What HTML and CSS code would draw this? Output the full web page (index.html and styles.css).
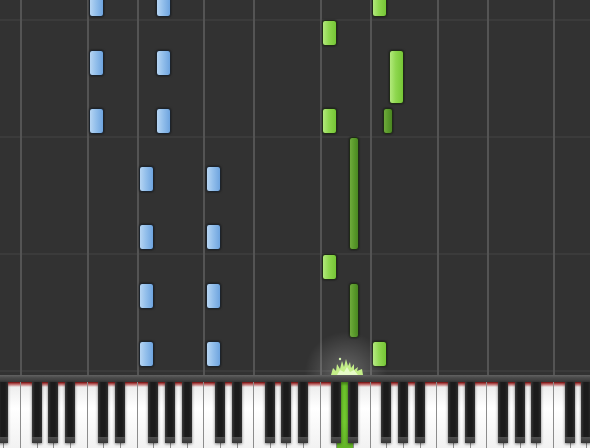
FILE: index.html
```html
<!DOCTYPE html>
<html lang="en">

    <head>
        <meta charset="UTF-8">
        <meta name="viewport" content="width=device-width, initial-scale=1.0">
        <link rel="stylesheet" href="styles.css">
        <title>Piano Roll</title>
    </head>

    <body>
        <div class="roll">
            <div class="grid">
                <div class="col col-edge"></div>
                <div class="col col-f"></div>
                <div class="col col-c"></div>
                <div class="col col-f"></div>
                <div class="col col-c"></div>
                <div class="col col-f"></div>
                <div class="col col-c"></div>
                <div class="col col-f"></div>
                <div class="col col-c"></div>
                <div class="col col-f"></div>
                <div class="col col-c"></div>
            </div>

            <!-- left hand -->
            <div class="note blue" style="left: 89px; top: -10px; height: 27px;"></div>
            <div class="note blue" style="left: 89px; top: 50px; height: 26px;"></div>
            <div class="note blue" style="left: 89px; top: 108px; height: 26px;"></div>
            <div class="note blue" style="left: 156px; top: -10px; height: 27px;"></div>
            <div class="note blue" style="left: 156px; top: 50px; height: 26px;"></div>
            <div class="note blue" style="left: 156px; top: 108px; height: 26px;"></div>

            <div class="note blue" style="left: 139px; top: 166px; height: 26px;"></div>
            <div class="note blue" style="left: 139px; top: 224px; height: 26px;"></div>
            <div class="note blue" style="left: 139px; top: 283px; height: 26px;"></div>
            <div class="note blue" style="left: 139px; top: 341px; height: 26px;"></div>
            <div class="note blue" style="left: 206px; top: 166px; height: 26px;"></div>
            <div class="note blue" style="left: 206px; top: 224px; height: 26px;"></div>
            <div class="note blue" style="left: 206px; top: 283px; height: 26px;"></div>
            <div class="note blue" style="left: 206px; top: 341px; height: 26px;"></div>

            <!-- right hand -->
            <div class="note green" style="left: 322px; top: 20px; height: 26px;"></div>
            <div class="note green" style="left: 322px; top: 108px; height: 26px;"></div>
            <div class="note green" style="left: 322px; top: 254px; height: 26px;"></div>
            <div class="note green" style="left: 372px; top: -10px; height: 27px;"></div>
            <div class="note green" style="left: 372px; top: 341px; height: 26px;"></div>
            <div class="note green" style="left: 389px; top: 50px; height: 54px;"></div>

            <div class="note green sharp" style="left: 383px; top: 108px; height: 26px;"></div>
            <div class="note green sharp" style="left: 349px; top: 137px; height: 113px;"></div>
            <div class="note green sharp" style="left: 349px; top: 283px; height: 55px;"></div>

            <div class="glow"></div>
            <svg class="splash" width="34" height="20" viewBox="0 0 34 20">
                <polygon points="1,20 3,13 6,16 7,9 10,14 12,6 14,12 16,4 18,11 20,7 21,13 24,9 24,15 28,12 27,16 32,14 33,20" fill="#c3ee88"/>
                <polygon points="7,20 10,15 14,17 17,12 20,17 24,15 28,20" fill="#e6fbc8"/>
                <circle cx="10" cy="4" r="1.2" fill="#d6f5b0"/>
            </svg>
        </div>

        <div class="keyboard">
            <div class="keybar"></div>
            <div class="keys">
                <div class="white"><div class="black"></div></div>
                <div class="white"><div class="black"></div></div>
                <div class="white"></div>
                <div class="white"><div class="black"></div></div>
                <div class="white"><div class="black"></div></div>
                <div class="white"><div class="black"></div></div>
                <div class="white"></div>

                <div class="white"><div class="black"></div></div>
                <div class="white"><div class="black"></div></div>
                <div class="white"></div>
                <div class="white"><div class="black"></div></div>
                <div class="white"><div class="black"></div></div>
                <div class="white"><div class="black"></div></div>
                <div class="white"></div>

                <div class="white"><div class="black"></div></div>
                <div class="white"><div class="black"></div></div>
                <div class="white"></div>
                <div class="white"><div class="black"></div></div>
                <div class="white"><div class="black"></div></div>
                <div class="white"><div class="black"></div></div>
                <div class="white"></div>

                <div class="white"><div class="black"></div></div>
                <div class="white pressed"><div class="black"></div></div>
                <div class="white"></div>
                <div class="white"><div class="black"></div></div>
                <div class="white"><div class="black"></div></div>
                <div class="white"><div class="black"></div></div>
                <div class="white"></div>

                <div class="white"><div class="black"></div></div>
                <div class="white"><div class="black"></div></div>
                <div class="white"></div>
                <div class="white"><div class="black"></div></div>
                <div class="white"><div class="black"></div></div>
                <div class="white"><div class="black"></div></div>
                <div class="white"></div>

                <div class="white"><div class="black"></div></div>
                <div class="white"><div class="black"></div></div>
                <div class="white"></div>
            </div>
        </div>
    </body>
</html>
```

FILE: styles.css
```css
body {
    margin: 0;
    width: 590px;
    height: 448px;
    overflow: hidden;
    background-color: #323232;
}

.roll {
    position: relative;
    height: 375px;
    overflow: hidden;
    background-color: #323232;
    background-image: repeating-linear-gradient(180deg, transparent 0 19px, #3b3b3b 19px 21px, transparent 21px 117px);
}

.grid {
    display: flex;
    height: 100%;
}

.col {
    flex: 0 0 auto;
    box-sizing: border-box;
    border-left: 2px solid #545454;
}

.col-edge {
    width: 20px;
    border-left: none;
}

.col-f {
    width: 66.667px;
}

.col-c {
    width: 50px;
}

.note {
    position: absolute;
    width: 15px;
    box-sizing: border-box;
    border: 1px solid #1c232b;
    border-radius: 3px;
    box-shadow: 0 0 2px rgba(0, 0, 0, 0.7);
}

.blue {
    background: linear-gradient(90deg, #b6d5f3, #93bfeb 45%, #6ea4df);
}

.green {
    background: linear-gradient(90deg, #b2e97c, #8ed74e 45%, #76c636);
    border-color: #1f2a17;
}

.green.sharp {
    width: 10px;
    background: linear-gradient(90deg, #6faa3c, #5a9a2b 50%, #4a8621);
}

.glow {
    position: absolute;
    left: 301px;
    top: 328px;
    width: 90px;
    height: 90px;
    border-radius: 50%;
    background: radial-gradient(circle, rgba(255, 255, 255, 0.26), rgba(255, 255, 255, 0) 65%);
}

.splash {
    position: absolute;
    left: 330px;
    top: 355px;
}

.keyboard {
    height: 73px;
    overflow: hidden;
}

.keybar {
    height: 7px;
    background: linear-gradient(#626262, #4a4a4a 40%, #383838);
}

.keys {
    display: flex;
    margin-left: -29px;
    height: 66px;
}

.white {
    position: relative;
    flex: 0 0 16.667px;
    box-sizing: border-box;
    border-right: 1px solid #8c8c8c;
    background: linear-gradient(#6e0808 0, #b85a5a 2px, #eeeeee 5px, #ffffff 40%, #f2f2f2);
}

.white.pressed {
    background: linear-gradient(#3f7a14 0, #6bc22a 4px, #72c92f 60%, #63b526);
}

.black {
    position: absolute;
    top: 0;
    right: -5px;
    z-index: 2;
    width: 10px;
    height: 61px;
    border-radius: 0 0 1px 1px;
    background: linear-gradient(90deg, #3a3a3a, #1b1b1b 30%, #1b1b1b 70%, #2e2e2e);
    box-shadow: 0 1px 3px rgba(0, 0, 0, 0.55);
}

.black::after {
    content: "";
    position: absolute;
    left: 0;
    right: 0;
    bottom: 0;
    height: 6px;
    background: linear-gradient(#505050, #363636);
}
```
